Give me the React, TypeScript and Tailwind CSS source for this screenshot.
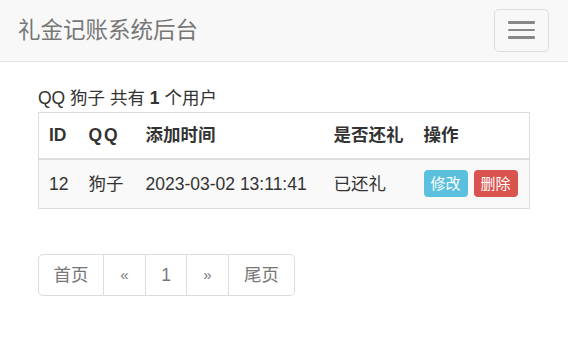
import React from 'react';

const font = { fontFamily: '"Liberation Sans", "Noto Sans CJK SC", sans-serif' };

const pages = [
  { label: '首页', w: 'w-[66px]', first: true },
  { label: '«', w: 'w-[42px]', small: true },
  { label: '1', w: 'w-[41px]' },
  { label: '»', w: 'w-[42px]', small: true },
  { label: '尾页', w: 'w-[66px]', last: true },
];

export default function App() {
  return (
    <div className="w-[568px] min-h-[340px] bg-white text-[#333] text-[17.5px]" style={font}>
      {/* navbar */}
      <div className="h-[62px] bg-[#f8f8f8] border-b border-[#e7e7e7] flex items-center justify-between pl-[18px] pr-[19px]">
        <span className="text-[22.5px] text-[#777] leading-[25px]">礼金记账系统后台</span>
        <button className="w-[55px] h-[43px] mb-[1px] border border-[#ddd] rounded-[5px] flex flex-col items-center justify-center gap-[5px]">
          <span className="block w-[27px] h-[2.5px] bg-[#888] rounded-[1px]" />
          <span className="block w-[27px] h-[2.5px] bg-[#888] rounded-[1px]" />
          <span className="block w-[27px] h-[2.5px] bg-[#888] rounded-[1px]" />
        </button>
      </div>

      <div className="px-[38px] pt-[24px]">
        <div className="leading-[25px] mb-[1px]">
          QQ 狗子 共有 <b>1</b> 个用户
        </div>

        <table className="w-full table-fixed border-collapse border border-[#ddd]">
          <colgroup>
            <col className="w-[40px]" />
            <col className="w-[57px]" />
            <col className="w-[188px]" />
            <col className="w-[90px]" />
            <col />
          </colgroup>
          <thead>
            <tr className="h-[46px] border-b-2 border-[#ddd]">
              <th className="text-left font-bold px-[10px]">ID</th>
              <th className="text-left font-bold px-[10px] tracking-[2px]">QQ</th>
              <th className="text-left font-bold px-[10px]">添加时间</th>
              <th className="text-left font-bold px-[10px]">是否还礼</th>
              <th className="text-left font-bold px-[10px]">操作</th>
            </tr>
          </thead>
          <tbody>
            <tr className="h-[50px] bg-[#f9f9f9]">
              <td className="px-[10px]">12</td>
              <td className="px-[10px]">狗子</td>
              <td className="px-[10px] whitespace-nowrap">2023-03-02 13:11:41</td>
              <td className="px-[10px]">已还礼</td>
              <td className="px-[10px]">
                <div className="flex gap-[6px]">
                  <span className="h-[27px] w-[44px] rounded-[4px] bg-[#5bc0de] text-white text-[15px] flex items-center justify-center">修改</span>
                  <span className="h-[27px] w-[44px] rounded-[4px] bg-[#d9534f] text-white text-[15px] flex items-center justify-center">删除</span>
                </div>
              </td>
            </tr>
          </tbody>
        </table>

        <div className="mt-[45px] flex">
          {pages.map((p, i) => (
            <div
              key={i}
              className={
                'h-[42px] flex items-center justify-center border-y border-r border-[#ddd] text-[#777] ' +
                p.w +
                (p.first ? ' border-l rounded-l-[5px]' : '') +
                (p.last ? ' rounded-r-[5px]' : '') +
                (p.small ? ' text-[15px]' : '')
              }
            >
              {p.label}
            </div>
          ))}
        </div>
      </div>
    </div>
  );
}
